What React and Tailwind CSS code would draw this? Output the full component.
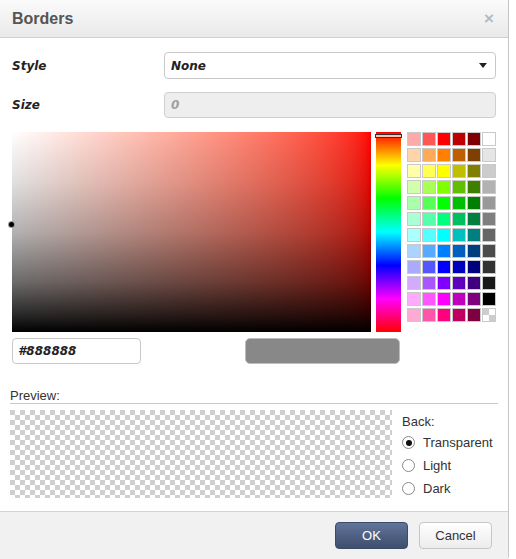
import { useState } from 'react'

const SWATCHES = [
  ['#ffaaaa', '#ff5656', '#ff0000', '#bf0000', '#7f0000', '#ffffff'],
  ['#ffd4aa', '#ffaa56', '#ff7f00', '#bf5f00', '#7f3f00', '#e5e5e5'],
  ['#ffffaa', '#ffff56', '#ffff00', '#bfbf00', '#7f7f00', '#cccccc'],
  ['#d4ffaa', '#aaff56', '#7fff00', '#5fbf00', '#3f7f00', '#b2b2b2'],
  ['#aaffaa', '#56ff56', '#00ff00', '#00bf00', '#007f00', '#999999'],
  ['#aaffd4', '#56ffaa', '#00ff7f', '#00bf5f', '#007f3f', '#7f7f7f'],
  ['#aaffff', '#56ffff', '#00ffff', '#00bfbf', '#007f7f', '#666666'],
  ['#aad4ff', '#56aaff', '#007fff', '#005fbf', '#003f7f', '#4c4c4c'],
  ['#aaaaff', '#5656ff', '#0000ff', '#0000bf', '#00007f', '#333333'],
  ['#d4aaff', '#aa56ff', '#7f00ff', '#5f00bf', '#3f007f', '#191919'],
  ['#ffaaff', '#ff56ff', '#ff00ff', '#bf00bf', '#7f007f', '#000000'],
  ['#ffaad4', '#ff56aa', '#ff007f', '#bf005f', '#7f003f', null],
]

const sans = "font-['Liberation_Sans',Arial,sans-serif]"
const dv = "font-['DejaVu_Sans',Verdana,sans-serif]"

function Radio({ label, checked, onClick }) {
  return (
    <div className="h-[23px] flex items-center cursor-pointer" onClick={onClick}>
      <span className="w-[13px] h-[13px] rounded-full border border-[#8a8a8a] bg-white flex items-center justify-center">
        {checked && <span className="w-[6px] h-[6px] rounded-full bg-[#111]" />}
      </span>
      <span className="ml-[8px] text-[13px] text-[#333] leading-[15px]">{label}</span>
    </div>
  )
}

export default function App() {
  const [back, setBack] = useState('transparent')

  return (
    <div className={`w-[516px] h-[559px] bg-white ${sans}`}>
      <div className="w-[509px] h-full flex flex-col border-r border-[#c6c6c6] rounded-br-[3px] overflow-hidden">
        {/* header */}
        <div className="h-[38px] shrink-0 flex items-center justify-between pl-3 pr-[14px] border-b border-[#cfcfcf] bg-gradient-to-b from-[#fbfbfb] to-[#e9e9e9]">
          <span className="text-[16px] font-bold text-[#555]">Borders</span>
          <span className="text-[17px] font-bold text-[#b9b9b9] leading-none">×</span>
        </div>

        {/* body */}
        <div className="flex-1 px-3 pt-[14px]">
          <div className="flex items-center h-[27px]">
            <span className={`w-[152px] text-[12px] font-bold italic text-[#222] ${dv}`}>Style</span>
            <div className="flex-1 h-[27px] rounded-[4px] border border-[#c8c8c8] bg-white flex items-center justify-between pl-[6px] pr-[8px]">
              <span className={`text-[12px] font-bold italic text-[#222] ${dv}`}>None</span>
              <svg width="8" height="5" viewBox="0 0 8 5"><polygon points="0,0 8,0 4,5" fill="#222" /></svg>
            </div>
          </div>
          <div className="flex items-center h-[26px] mt-[13px]">
            <span className={`w-[152px] text-[12px] font-bold italic text-[#222] ${dv}`}>Size</span>
            <div className="flex-1 h-[26px] rounded-[4px] border border-[#cfcfcf] bg-[#eeeeee] flex items-center pl-[6px]">
              <span className={`text-[12px] font-bold italic text-[#a0a0a0] ${dv}`}>0</span>
            </div>
          </div>

          {/* colour picker */}
          <div className="flex mt-[14px]">
            <div className="relative w-[359px] h-[200px] bg-gradient-to-r from-white to-[#ff0000]">
              <div className="w-full h-full bg-[linear-gradient(to_bottom,rgba(0,0,0,0)_0%,rgba(0,0,0,0.12)_25%,rgba(0,0,0,0.3)_50%,rgba(0,0,0,0.58)_75%,rgba(0,0,0,0.85)_92%,#000_100%)]" />
              <span className="absolute left-[-3px] top-[90px] w-[5px] h-[5px] rounded-full bg-black ring-1 ring-[#999]" />
            </div>
            <div className="relative ml-[5px] w-[25px] h-[200px] bg-[linear-gradient(to_bottom,#f00_0%,#ff0_16.66%,#0f0_33.33%,#0ff_50%,#00f_66.66%,#f0f_83.33%,#f00_100%)]">
              <span className="absolute left-[-1px] right-[-1px] top-[2px] h-[4px] border border-[#333] bg-white/70" />
            </div>
            <div className="ml-[6px] grid grid-cols-6 gap-x-[1px] gap-y-[2px] content-start">
              {SWATCHES.flat().map((c, i) => (
                <div key={i} className="w-[14px] h-[14px] border border-[#c9c9c9]">
                  {c ? (
                    <div className="w-full h-full" style={{ backgroundColor: c }} />
                  ) : (
                    <div className="w-full h-full bg-[conic-gradient(#fff_0_25%,#cdcdcd_0_50%,#fff_0_75%,#cdcdcd_0)] bg-[length:12px_12px]" />
                  )}
                </div>
              ))}
            </div>
          </div>

          <div className="flex items-center mt-[6px]">
            <div className="w-[129px] h-[26px] rounded-[4px] border border-[#c8c8c8] bg-white flex items-center pl-[5px]">
              <span className={`text-[12px] font-bold italic text-[#222] ${dv}`}>#888888</span>
            </div>
            <div className="ml-[104px] w-[155px] h-[26px] rounded-[5px] border border-[#bdbdbd] bg-[#888888]" />
          </div>

          {/* preview */}
          <div className="-mx-[2px] mt-[24px]">
            <div className="text-[13px] leading-[15px] text-[#333] border-b border-[#c8c8c8]">Preview:</div>
            <div className="flex mt-[6px]">
              <div className="w-[382px] h-[88px] bg-[conic-gradient(#fff_0_25%,#cfcfcf_0_50%,#fff_0_75%,#cfcfcf_0)] bg-[length:10px_10px]" />
              <div className="ml-[10px] pt-[4px]">
                <div className="text-[13px] leading-[15px] text-[#333] mb-[2px]">Back:</div>
                <Radio label="Transparent" checked={back === 'transparent'} onClick={() => setBack('transparent')} />
                <Radio label="Light" checked={back === 'light'} onClick={() => setBack('light')} />
                <Radio label="Dark" checked={back === 'dark'} onClick={() => setBack('dark')} />
              </div>
            </div>
          </div>
        </div>

        {/* footer */}
        <div className="h-[48px] shrink-0 border-t border-[#d2d2d2] bg-[#f1f1f1] flex justify-end items-start pt-[10px] pr-4 gap-[11px]">
          <button className="w-[73px] h-[27px] rounded-[4px] border border-[#3c4b68] bg-gradient-to-b from-[#61749a] to-[#3e4e6d] text-white text-[13px]">OK</button>
          <button className="w-[73px] h-[27px] rounded-[4px] border border-[#c6c6c6] bg-gradient-to-b from-white to-[#ececec] text-[#333] text-[13px]">Cancel</button>
        </div>
      </div>
    </div>
  )
}
